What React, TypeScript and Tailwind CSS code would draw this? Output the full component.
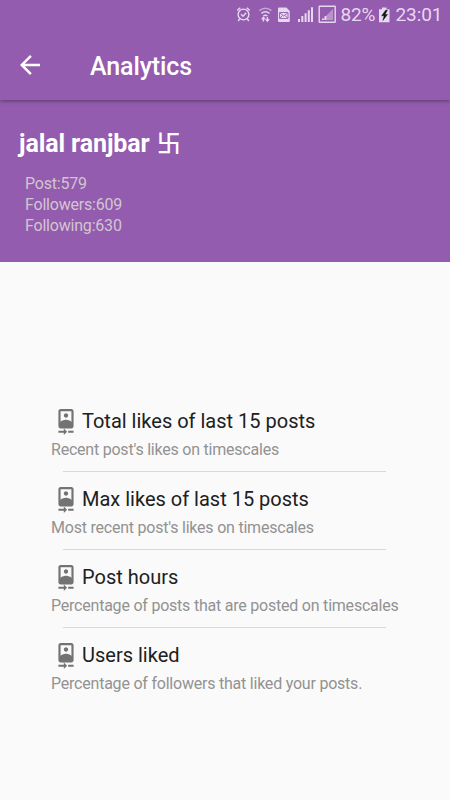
import React from "react";

const items = [
  { title: "Total likes of last 15 posts", note: "Recent post's likes on timescales" },
  { title: "Max likes of last 15 posts", note: "Most recent post's likes on timescales" },
  { title: "Post hours", note: "Percentage of posts that are posted on timescales" },
  { title: "Users liked", note: "Percentage of followers that liked your posts." },
];

function CameraFront() {
  return (
    <svg className="h-[26px] w-[26px] shrink-0" viewBox="0 0 24 24" fill="#737373">
      <path d="M10 20H5v2h5v2l3-3-3-3v2zm4 0v2h5v-2h-5zM12 8c1.1 0 2-.9 2-2s-.9-2-1.99-2S10 4.9 10 6s.9 2 2 2zm5-8H7C5.9 0 5 .9 5 2v14c0 1.1.9 2 2 2h10c1.1 0 2-.9 2-2V2c0-1.1-.9-2-2-2zM7 2h10v10.5c0-1.67-3.33-2.5-5-2.5s-5 .83-5 2.5V2z" />
    </svg>
  );
}

function StatusIcons() {
  return (
    <svg className="h-[30px] w-[115px] shrink-0" viewBox="225 0 115 30" fill="none" stroke="#e6d8ee" strokeWidth="1.4">
      <circle cx="243.5" cy="14.5" r="5.4" />
      <path d="M237.3 10.4l3-2.6M249.7 10.4l-3-2.6M239.6 19l-1.4 2M247.4 19l1.4 2M241 14.3l2 2 3.2-3.6" />
      <path d="M259.4 10.6q6-4.8 12 0" opacity="0.6" />
      <path d="M261.4 13.4q4-3.2 8 0M263.4 16q2-1.5 4 0" />
      <path d="M263.4 21.5v-4M267.4 17v4" />
      <path d="M261 19.2l2.4-3 2.4 3zM265 19.2l2.4 3 2.4-3z" fill="#e6d8ee" stroke="none" />
      <path d="M279 7.6h7.4l3.4 3.4V21q0 1-1 1h-9.8q-1 0-1-1V8.6q0-1 1-1z" fill="#e6d8ee" stroke="none" />
      <path d="M279.5 12.5h8.5v6h-8.5zM280 13l3.75 3 3.75-3M280 18l2.5-2.5M287.5 18l-2.5-2.5" stroke="#945cae" strokeWidth="0.9" />
      <path d="M298 19h2v3h-2zM301.3 16h2v6h-2zM304.6 13.2h2v8.8h-2zM307.8 10.2h2v11.8h-2zM311 7.3h2v14.7h-2z" fill="#e6d8ee" stroke="none" />
      <rect x="319.2" y="6.2" width="16" height="16" rx="0.5" />
      <path d="M322 20L333 9v11z" fill="#b993ca" stroke="none" />
      <path d="M322 18.5h1.8v1.5H322zM324.6 16h1.8v4h-1.8z" fill="#e6d8ee" stroke="none" />
    </svg>
  );
}

function Battery() {
  return (
    <svg className="h-[30px] w-[14px] shrink-0" viewBox="378 0 14 30">
      <path d="M382 7.4h4.5v1.8h3v13h-10.5v-13h3z" fill="#e6d8ee" />
      <path d="M385.7 10.2l-4 5.6h2.5l-1.3 4.6 4.6-6h-2.6l2.5-4.2z" fill="#111" stroke="#111" strokeWidth="0.5" />
    </svg>
  );
}

export default function App() {
  return (
    <div className="flex h-[800px] w-[450px] flex-col overflow-hidden bg-[#fafafa] font-['Roboto','Noto_Sans_CJK_SC',sans-serif]">
      <header className="relative z-10 flex h-[100px] shrink-0 flex-col bg-[#945cae] shadow-[0_1px_4px_rgba(0,0,0,0.4)]">
        <div className="flex h-[30px] items-center pl-[225px] text-[19px] leading-[30px] text-[#e6d8ee]">
          <StatusIcons />
          <span className="w-[38px] pl-[0.5px] tracking-[-0.2px] whitespace-nowrap">82%</span>
          <Battery />
          <span className="ml-[3.5px] tracking-[-0.1px] whitespace-nowrap">23:01</span>
        </div>
        <div className="flex h-[70px] items-center pl-[15px] text-white">
          <svg className="h-[30px] w-[30px]" viewBox="0 0 24 24" fill="currentColor">
            <path d="M20 11H7.83l5.59-5.59L12 4l-8 8 8 8 1.41-1.41L7.83 13H20v-2z" />
          </svg>
          <h1 className="ml-[45px] pt-[3px] text-[25px] leading-[30px] font-medium tracking-[-0.1px]">Analytics</h1>
        </div>
      </header>

      <section className="h-[162px] shrink-0 bg-[#945cae] pt-[29px] pl-[19px]">
        <h2 className="h-[30px] text-[25px] leading-[30px] font-bold tracking-[-0.1px] whitespace-nowrap text-white">
          jalal ranjbar <span className="ml-px text-[24px] font-medium">卐</span>
        </h2>
        <div className="mt-[14px] pl-[6px] text-[16px] leading-[21px] tracking-[-0.2px] text-[#d1c6d0]">
          <p>Post:579</p>
          <p>Followers:609</p>
          <p>Following:630</p>
        </div>
      </section>

      <main className="pt-[132px] pl-[51px]">
        {items.map((item, i) => (
          <div key={item.title} className="h-[78px]">
            <div className="flex h-[54px] flex-col pt-[14px]">
              <div className="flex h-[28px] pl-[2px]">
                <span className="pt-[1px]"><CameraFront /></span>
                <h3 className="ml-[3px] text-[20px] leading-[27px] whitespace-nowrap text-[#202020]">{item.title}</h3>
              </div>
              <p className="mt-[5px] text-[16px] leading-[20px] tracking-[-0.22px] whitespace-nowrap text-[#929292]">{item.note}</p>
            </div>
            {i < items.length - 1 && <hr className="mt-[23px] ml-[12px] w-[323px] border-[#d9d9d9]" />}
          </div>
        ))}
      </main>
    </div>
  );
}
